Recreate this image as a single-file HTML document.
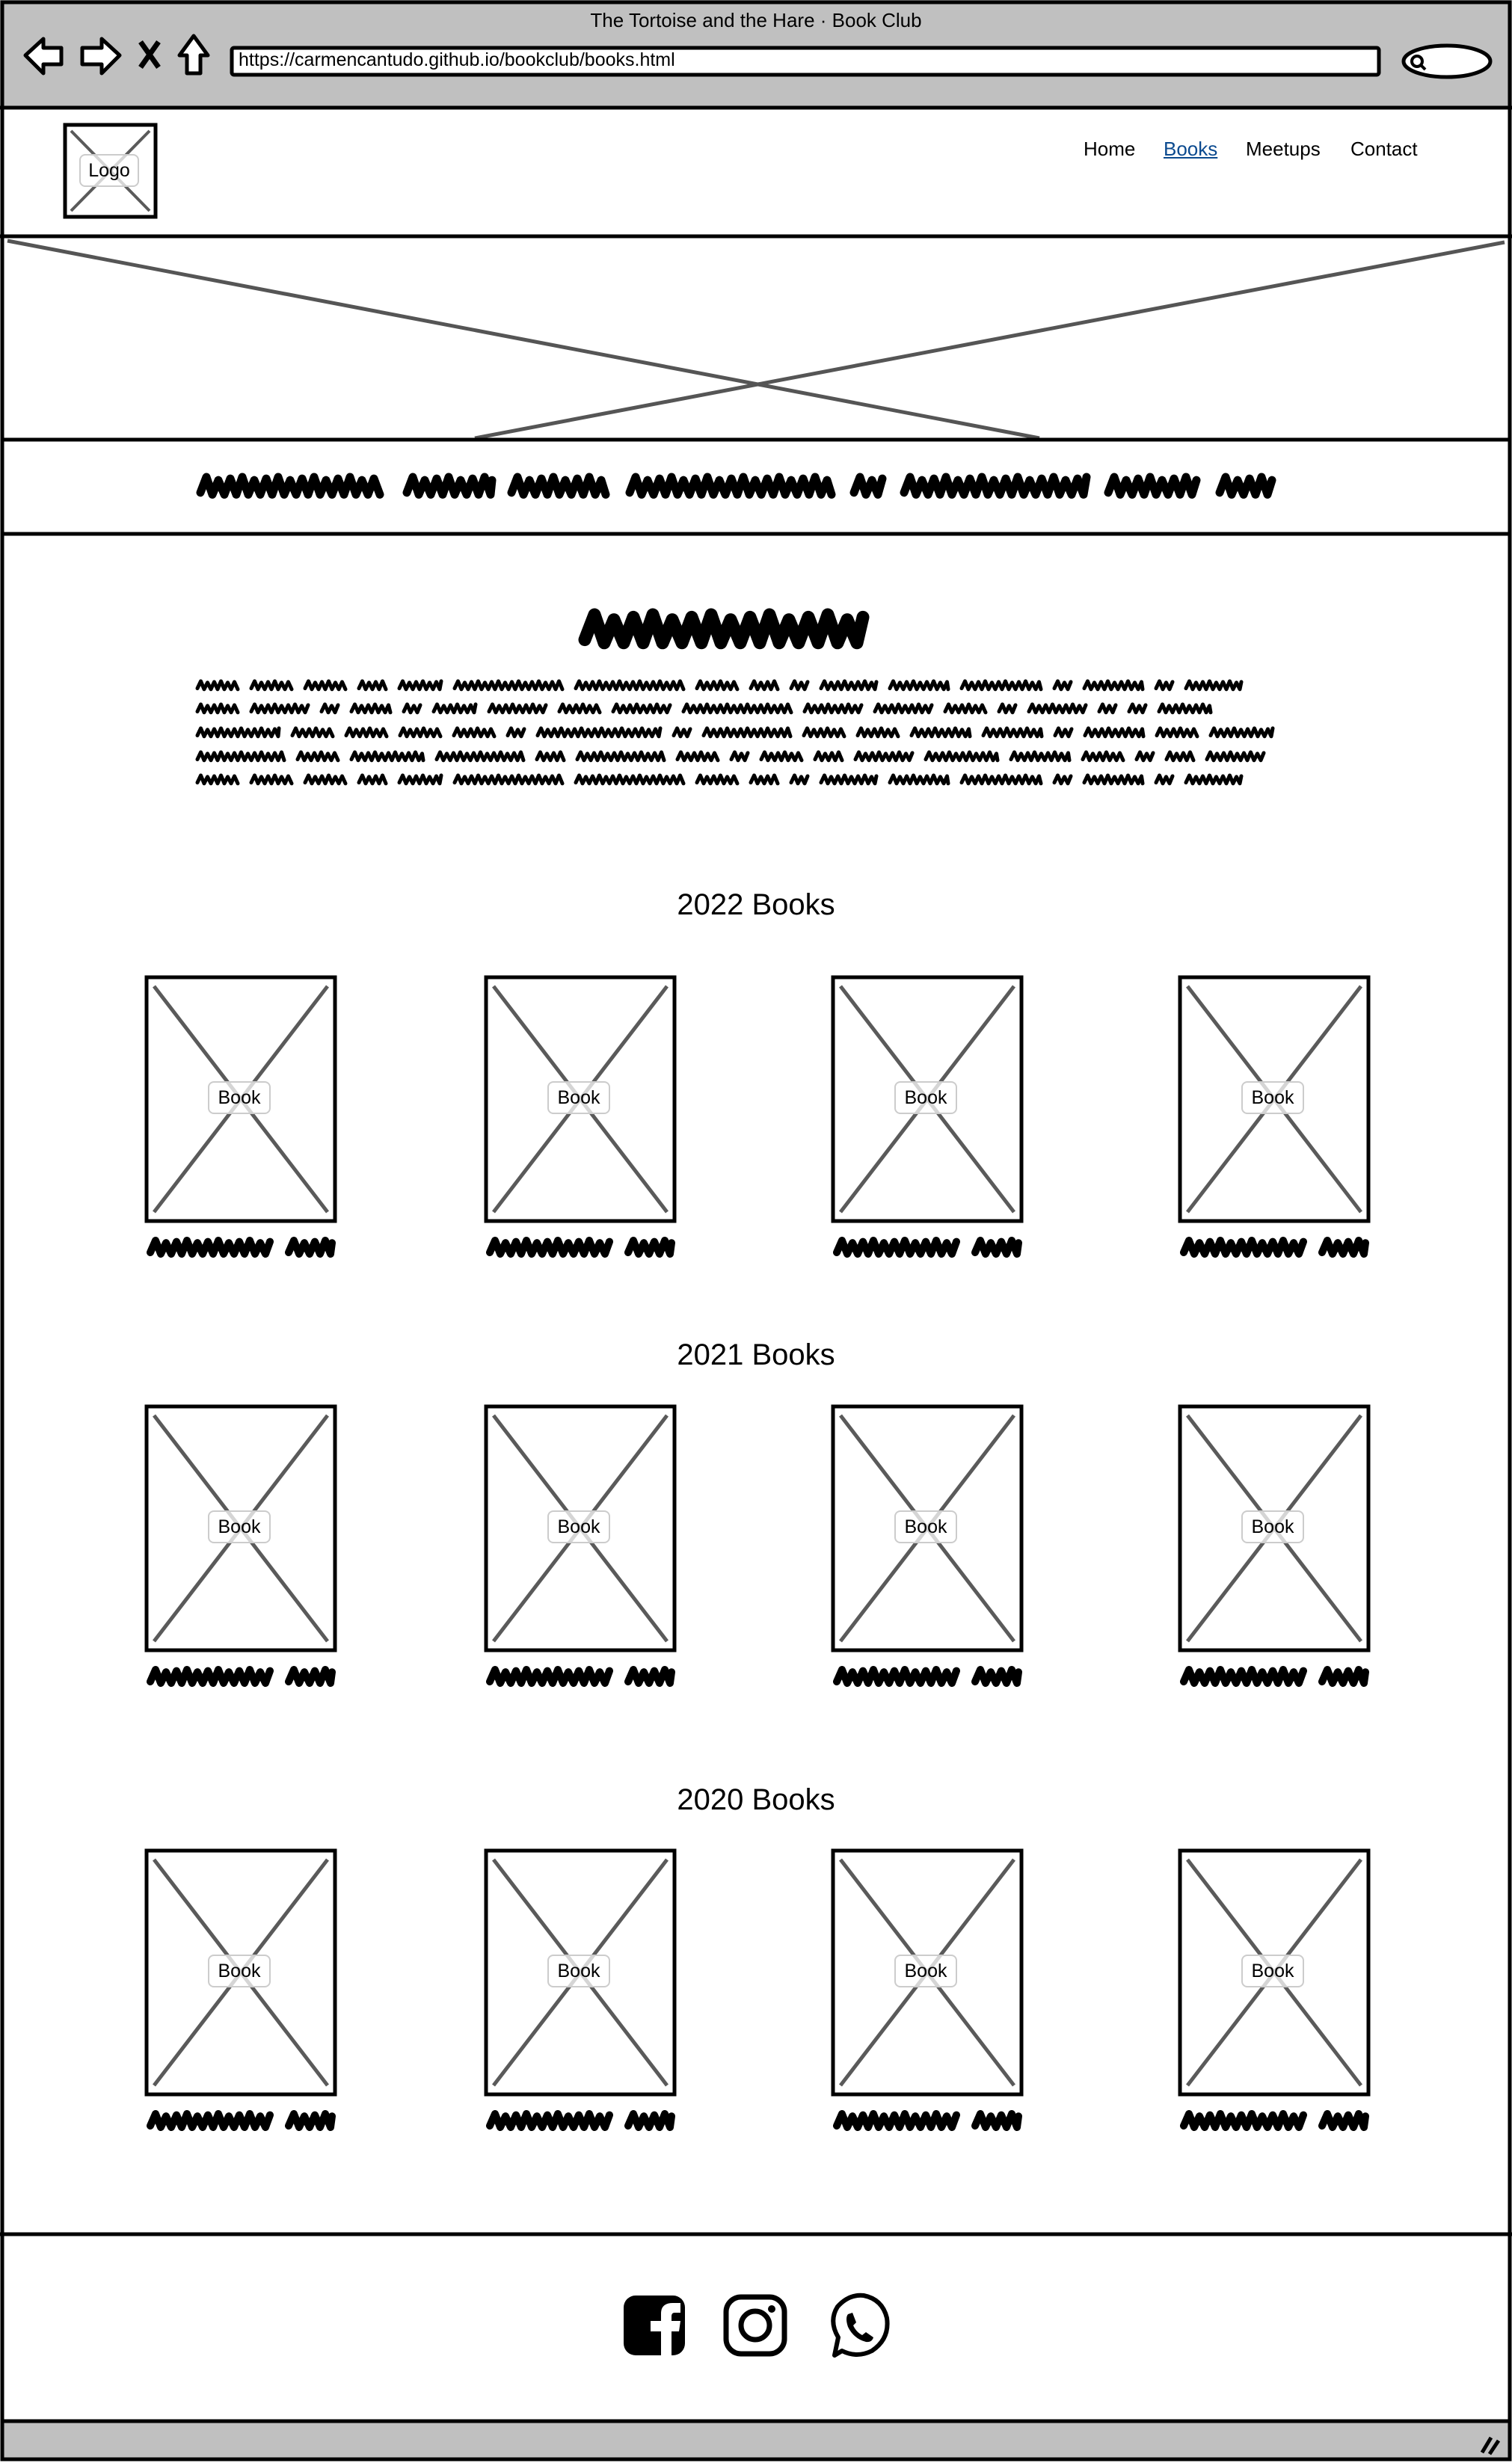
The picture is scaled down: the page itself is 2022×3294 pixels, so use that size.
<!DOCTYPE html>
<html><head><meta charset="utf-8">
<style>
html,body{margin:0;padding:0;background:#fff;}
body{width:2022px;height:3294px;position:relative;overflow:hidden;font-family:"Liberation Sans",sans-serif;color:#000;}
.t{position:absolute;white-space:nowrap;}
.nav{font-size:26px;top:184px;}
.bk{position:absolute;width:80px;height:40px;border:2px solid #ccc;border-radius:8px;background:rgba(255,255,255,.75);font-size:25px;text-align:center;line-height:40px;}
.h{font-size:40px;left:0;width:2022px;text-align:center;}
</style></head><body>
<svg id="s" width="2022" height="3294" style="position:absolute;left:0;top:0">
<defs>
<g id="book">
<rect x="0" y="0" width="252" height="326" fill="#fff" stroke="#000" stroke-width="5"/>
<path d="M10,12 L242,314 M242,12 L10,314" stroke="#5a5a5a" stroke-width="5"/>
</g>
</defs>
<rect x="0" y="0" width="2022" height="145" fill="#c0c0c0"/>
<rect x="3" y="3" width="2016" height="3286" fill="none" stroke="#000" stroke-width="5"/>
<line x1="0" y1="144" x2="2022" y2="144" stroke="#000" stroke-width="5"/>
<rect x="310" y="64" width="1534" height="36" rx="3" fill="#fff" stroke="#000" stroke-width="5"/>
<ellipse cx="1935" cy="82" rx="58" ry="21" fill="#fff" stroke="#000" stroke-width="5"/>
<circle cx="1895" cy="82" r="7" fill="none" stroke="#000" stroke-width="4"/><line x1="1900" y1="87" x2="1906" y2="93" stroke="#000" stroke-width="4"/>
<path d="M34,74 L58,52 L58,64 L82,64 L82,86 L58,86 L58,98 Z" fill="#fff" stroke="#000" stroke-width="5" stroke-linejoin="round"/>
<path d="M160,74 L136,52 L136,64 L110,64 L110,86 L136,86 L136,98 Z" fill="#fff" stroke="#000" stroke-width="5" stroke-linejoin="round"/>
<path d="M188,56 L212,90 M212,56 L188,90" stroke="#000" stroke-width="7"/>
<path d="M259,48 L240,74 L250,74 L250,98 L268,98 L268,74 L278,74 Z" fill="#fff" stroke="#000" stroke-width="5" stroke-linejoin="round"/>
<rect x="87" y="167" width="121" height="123" fill="#fff" stroke="#000" stroke-width="5"/>
<path d="M95,175 L200,282 M200,175 L95,282" stroke="#5a5a5a" stroke-width="4"/>
<line x1="0" y1="316" x2="2022" y2="316" stroke="#000" stroke-width="5"/>
<path d="M10,322 L1390,586 M2012,324 L635,586" stroke="#555" stroke-width="5"/>
<rect x="3" y="588" width="2016" height="126" fill="#fff" stroke="#000" stroke-width="5"/>
<use href="#book" x="196" y="1307"/><use href="#book" x="650" y="1307"/><use href="#book" x="1114" y="1307"/><use href="#book" x="1578" y="1307"/>
<use href="#book" x="196" y="1881"/><use href="#book" x="650" y="1881"/><use href="#book" x="1114" y="1881"/><use href="#book" x="1578" y="1881"/>
<use href="#book" x="196" y="2475"/><use href="#book" x="650" y="2475"/><use href="#book" x="1114" y="2475"/><use href="#book" x="1578" y="2475"/>
<line x1="0" y1="2988" x2="2022" y2="2988" stroke="#000" stroke-width="5"/>
<rect x="834" y="3070" width="82" height="80" rx="16" fill="#000"/>
<path d="M884,3150 L884,3118 L870,3118 L870,3104 L884,3104 L884,3094 Q884,3080 900,3080 L910,3080 L910,3093 L902,3093 Q898,3093 898,3098 L898,3104 L910,3104 L908,3118 L898,3118 L898,3150 Z" fill="#fff"/>
<rect x="971" y="3072" width="78" height="76" rx="20" fill="none" stroke="#000" stroke-width="7"/>
<circle cx="1010" cy="3110" r="19" fill="none" stroke="#000" stroke-width="7"/>
<circle cx="1032" cy="3088" r="5" fill="#000"/>
<path d="M1116,3150 L1121,3126 Q1108,3104 1120,3085 Q1135,3068 1155,3070 Q1180,3075 1186,3100 Q1190,3128 1166,3144 Q1146,3154 1126,3144 Z" fill="none" stroke="#000" stroke-width="6" stroke-linejoin="round"/>
<path d="M1134,3095 Q1130,3100 1134,3112 Q1142,3128 1158,3132 Q1166,3133 1168,3126 L1158,3119 L1153,3123 Q1145,3119 1141,3110 L1145,3106 L1140,3093 Z" fill="#000"/>
<rect x="3" y="3238" width="2016" height="51" fill="#c0c0c0" stroke="#000" stroke-width="5"/>
<path d="M1982,3280 L1994,3260 M1992,3282 L2004,3264" stroke="#000" stroke-width="5"/>
<g id="sc" fill="none" stroke="#000" stroke-linecap="round" stroke-linejoin="round"></g>
</svg>
<div class="t" style="left:0;width:2022px;text-align:center;top:12px;font-size:26px;">The Tortoise and the Hare · Book Club</div>
<div class="t" style="left:319px;top:66px;font-size:25px;">https://carmencantudo.github.io/bookclub/books.html</div>
<div class="bk" style="left:106px;top:206px;width:76px;">Logo</div>
<div class="t nav" style="left:1449px;">Home</div>
<div class="t nav" style="left:1556px;color:#0b4a8f;text-decoration:underline;">Books</div>
<div class="t nav" style="left:1666px;">Meetups</div>
<div class="t nav" style="left:1806px;">Contact</div>
<div class="t h" style="top:1188px;">2022 Books</div>
<div class="t h" style="top:1790px;">2021 Books</div>
<div class="t h" style="top:2385px;">2020 Books</div>
<div class="bk" style="left:278px;top:1446px;">Book</div><div class="bk" style="left:732px;top:1446px;">Book</div><div class="bk" style="left:1196px;top:1446px;">Book</div><div class="bk" style="left:1660px;top:1446px;">Book</div>
<div class="bk" style="left:278px;top:2020px;">Book</div><div class="bk" style="left:732px;top:2020px;">Book</div><div class="bk" style="left:1196px;top:2020px;">Book</div><div class="bk" style="left:1660px;top:2020px;">Book</div>
<div class="bk" style="left:278px;top:2614px;">Book</div><div class="bk" style="left:732px;top:2614px;">Book</div><div class="bk" style="left:1196px;top:2614px;">Book</div><div class="bk" style="left:1660px;top:2614px;">Book</div>
<script>
(function(){
var g=document.getElementById('sc'),d='';
function add(x,y,w,h,sw,step){
  var p='M'+x+','+(y+h*0.8);var cx=x,up=true,i=0;
  while(cx<x+w){var nx=Math.min(cx+step,x+w);var yy=up?(y+(i%3)*h*0.08):(y+h-(i%2)*h*0.1);p+=' L'+nx.toFixed(1)+','+yy.toFixed(1);up=!up;cx=nx;i++;}
  var e=document.createElementNS('http://www.w3.org/2000/svg','path');e.setAttribute('d',p);e.setAttribute('stroke-width',sw);g.appendChild(e);
}
// banner
[[262,252],[538,126],[678,138],[836,282],[1136,50],[1203,256],[1476,130],[1625,82]].forEach(function(a){add(a[0]+6,638,a[1]-12,26,11,8);});
// heading
add(782,822,372,42,17,13);
// paragraph
var L=[
[[261,60],[333,60],[405,60],[477,42],[531,62],[605,150],[767,150],[929,60],[1001,42],[1055,28],[1095,80],[1187,84],[1283,112],[1407,28],[1447,84],[1543,28],[1583,80]],
[[261,60],[333,82],[427,28],[467,58],[537,28],[577,62],[651,82],[745,60],[817,82],[911,150],[1073,82],[1167,82],[1261,60],[1333,28],[1373,82],[1467,28],[1507,28],[1547,75]],
[[261,115],[388,60],[460,60],[532,60],[604,60],[676,28],[716,170],[898,28],[938,122],[1072,60],[1144,60],[1216,84],[1312,84],[1408,28],[1448,84],[1544,60],[1616,89]],
[[261,122],[395,60],[467,102],[581,122],[715,42],[769,122],[903,60],[975,28],[1015,60],[1087,42],[1141,82],[1235,102],[1349,84],[1445,60],[1517,28],[1557,42],[1611,82]],
[[261,60],[333,60],[405,60],[477,42],[531,62],[605,150],[767,150],[929,60],[1001,42],[1055,28],[1095,80],[1187,84],[1283,112],[1407,28],[1447,84],[1543,28],[1583,80]]];
var Y=[911,942,974,1006,1037];
L.forEach(function(line,k){line.forEach(function(a){add(a[0]+3,Y[k],a[1]-6,12,5,4.5);});});
// captions
var xs=[196,650,1114,1578],ys=[1659,2233,2827];
ys.forEach(function(y){xs.forEach(function(x){add(x+5,y,160,20,10,7);add(x+190,y,58,20,10,7);});});
})();
</script>
</body></html>
